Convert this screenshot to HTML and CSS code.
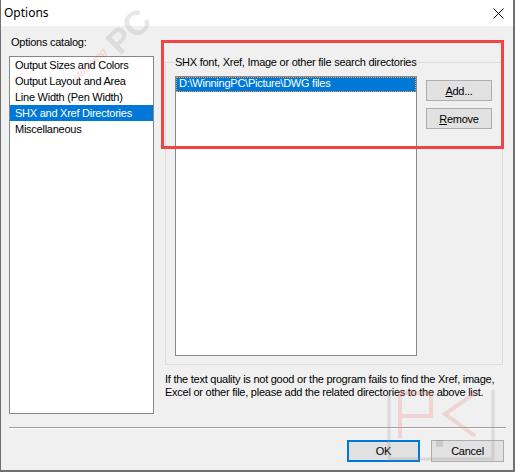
FILE: index.html
```html
<!DOCTYPE html>
<html lang="en">
<head>
    <meta charset="UTF-8">
    <title>Options</title>
    <link rel="stylesheet" href="styles.css">
</head>
<body>
    <div class="window">
        <div class="titlebar">
            <span class="title">Options</span>
            <svg class="close" width="11" height="11" viewBox="0 0 11 11">
                <path d="M0.5 0.5 L10.5 10.5 M10.5 0.5 L0.5 10.5" stroke="#000" stroke-width="1" fill="none"/>
            </svg>
        </div>

        <div class="content">
            <div class="main">
                <div class="catalog">
                    <div class="label">Options catalog:</div>
                    <ul class="listbox">
                        <li>Output Sizes and Colors</li>
                        <li>Output Layout and Area</li>
                        <li>Line Width (Pen Width)</li>
                        <li class="selected">SHX and Xref Directories</li>
                        <li>Miscellaneous</li>
                    </ul>
                </div>

                <div class="page">
                    <fieldset class="group">
                        <legend>SHX font, Xref, Image or other file search directories</legend>
                        <div class="group-row">
                            <ul class="dirlist">
                                <li class="selected">D:\WinningPC\Picture\DWG files</li>
                            </ul>
                            <div class="side-buttons">
                                <button class="btn"><u>A</u>dd...</button>
                                <button class="btn"><u>R</u>emove</button>
                            </div>
                        </div>
                    </fieldset>
                    <p class="note">If the text quality is not good or the program fails to find the Xref, image, Excel or other file, please add the related directories to the above list.</p>
                </div>
            </div>

            <div class="separator"></div>

            <div class="footer">
                <button class="btn btn-wide default">OK</button>
                <button class="btn btn-wide">Cancel</button>
            </div>
        </div>

        <!-- annotation and watermarks drawn over the dialog -->
        <div class="highlight"></div>
        <div class="mark-pc">PC</div>
        <div class="mark-winning">Winning</div>
        <svg class="mark-box" width="110" height="72" viewBox="0 0 110 72">
            <path d="M2 0 V69 H106 V0" stroke="#9a9a9a" stroke-width="3" fill="none"/>
            <path d="M13 48 V3 H44 V26 H13" stroke="#f08080" stroke-width="4" fill="none"/>
            <path d="M88 3 L58 24 L88 46" stroke="#f08080" stroke-width="4" fill="none"/>
            <rect x="49" y="50" width="7" height="7" rx="1" fill="#888"/>
        </svg>
    </div>
</body>
</html>
```

FILE: styles.css
```css
body {
    margin: 0;
    background: #f0f0f0;
    font-family: "Liberation Sans", Arial, sans-serif;
    font-size: 11px;
    letter-spacing: -0.25px;
    color: #000;
}
.window {
    position: relative;
    width: 515px;
    height: 472px;
    box-sizing: border-box;
    border-left: 1px solid #707070;
    border-right: 2px solid #707070;
    border-bottom: 2px solid #707070;
    background: #f0f0f0;
    overflow: hidden;
}
.titlebar {
    height: 26px;
    background: #fff;
    display: flex;
    align-items: center;
    justify-content: space-between;
    padding: 0 9px 0 3px;
}
.title {
    font-family: "Noto Sans", "Open Sans", sans-serif;
    font-size: 12px;
    letter-spacing: 0;
    margin-top: -1px;
}
.close {
    margin-top: 1px;
}
.content {
    padding: 10px 8px 0 8px;
}
.main {
    display: flex;
    gap: 11px;
}
.catalog {
    width: 145px;
}
.label {
    line-height: 13px;
    padding-left: 2px;
}
ul {
    list-style: none;
    margin: 0;
    padding: 0;
    background: #fff;
    border: 1px solid #828790;
    box-sizing: border-box;
}
.listbox {
    margin-top: 7px;
    height: 358px;
}
.listbox li {
    height: 16px;
    line-height: 16px;
    padding-left: 5px;
    white-space: nowrap;
}
.listbox li.selected {
    background: #0078d7;
    color: #fff;
}
.page {
    width: 338px;
    margin-top: 20px;
}
.group {
    margin: 0;
    padding: 7px 10px 8px 9px;
    border: 1px solid #dcdcdc;
    min-width: 0;
}
.group legend {
    padding: 0;
    margin-left: 0;
    line-height: 13px;
}
.group-row {
    display: flex;
    gap: 9px;
}
.dirlist {
    width: 242px;
    height: 280px;
}
.dirlist li {
    height: 13px;
    line-height: 11px;
    padding-left: 2px;
    background: #0078d7;
    color: #fff;
    border: 1px dotted #ff9b3a;
    white-space: nowrap;
}
.side-buttons {
    display: flex;
    flex-direction: column;
    gap: 7px;
    padding-top: 4px;
}
.btn {
    font-family: "Liberation Sans", Arial, sans-serif;
    font-size: 11px;
    letter-spacing: -0.25px;
    width: 66px;
    height: 21px;
    padding: 0;
    background: #e1e1e1;
    border: 1px solid #adadad;
    color: #000;
}
.note {
    margin: 8px 0 0 0;
    line-height: 13px;
}
.separator {
    margin-top: 13px;
    height: 1px;
    background: #a0a0a0;
    border-bottom: 1px solid #fff;
    width: 497px;
}
.footer {
    display: flex;
    justify-content: flex-end;
    gap: 11px;
    padding: 11px 1px 0 0;
}
.btn-wide {
    width: 73px;
    height: 22px;
}
.default {
    border: 2px solid #0078d7;
}
.highlight {
    position: absolute;
    left: 160px;
    top: 40px;
    width: 343px;
    height: 109px;
    box-sizing: border-box;
    border: 3px solid #f24444;
}
.mark-pc {
    position: absolute;
    left: 104px;
    top: 12px;
    font-size: 34px;
    font-weight: bold;
    letter-spacing: 0;
    color: rgba(170, 170, 170, 0.3);
    transform: rotate(-45deg);
}
.mark-winning {
    position: absolute;
    left: 68px;
    top: 58px;
    font-size: 11px;
    font-style: italic;
    font-weight: bold;
    color: rgba(240, 60, 60, 0.18);
    transform: rotate(-45deg);
}
.mark-box {
    position: absolute;
    left: 386px;
    top: 390px;
    opacity: 0.25;
}
```
